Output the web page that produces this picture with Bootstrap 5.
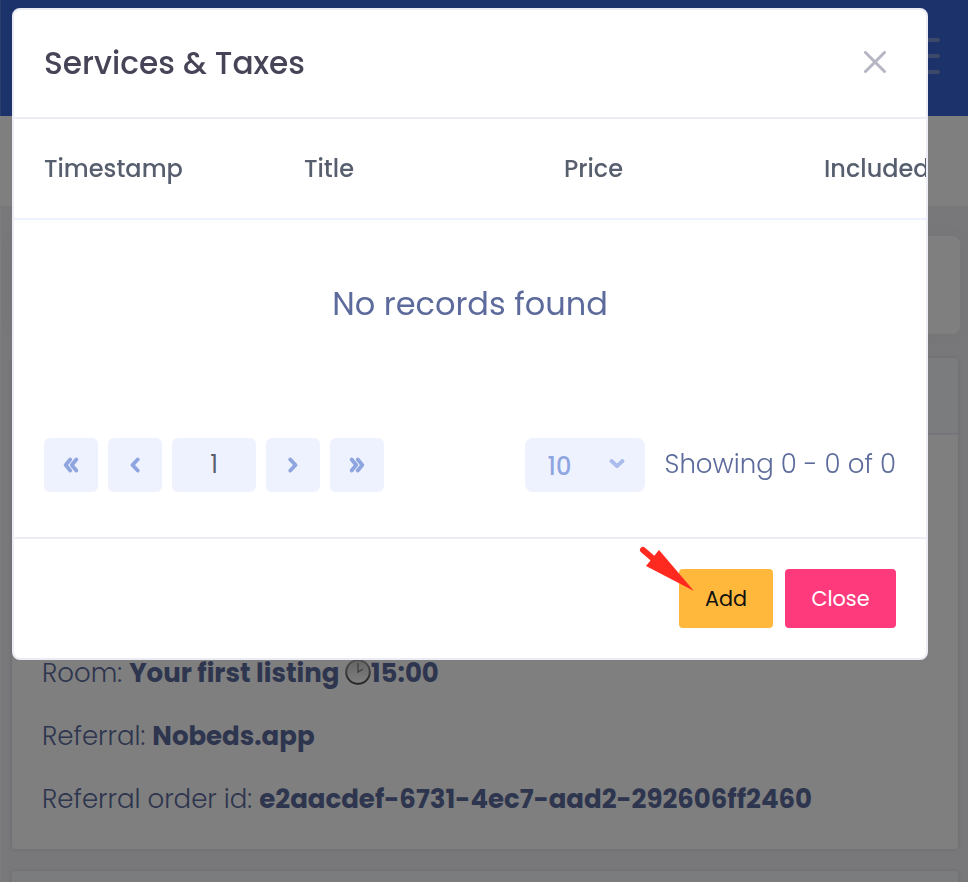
<!DOCTYPE html>
<html lang="en">
<head>
<meta charset="utf-8">
<meta name="viewport" content="width=device-width, initial-scale=1">
<title>Services &amp; Taxes</title>
<link href="https://cdn.jsdelivr.net/npm/bootstrap@5.3.0/dist/css/bootstrap.min.css" rel="stylesheet">
<style>
html{overflow:hidden}
body{font-family:Poppins,Inter,"Open Sans",sans-serif;background:#f1f1f6;color:#5c6b9c;height:882px;overflow:hidden;line-height:1.5}
.topbar{height:116px;background:#3864d6;padding:0 28px 4px 0;border-left:1px solid #5a7cd8}
.burger{width:36px;gap:12px}
.burger span{height:4px;border-radius:2px;background:#7a92d0}
.subbar{height:90px}
.page{height:676px;overflow:hidden;padding:30px 8px 0 11px;border-left:1px solid #fbfbfe}
.search-card{height:98px;border-radius:8px;box-shadow:0 0 24px rgba(60,70,110,.05)}
.info-card{border:0;border-radius:4px;box-shadow:0 0 5px rgba(60,60,90,.14);margin:24px 2px 0 0}
.info-card .card-header{height:77px;background:#f7f9fb;border-bottom:2px solid #ebedf2}
.info-body{height:414px;padding:0 30px 18px;font-size:26px;font-weight:300}
.info-body p{height:63px;line-height:63px;margin:0;white-space:nowrap}
.info-body b{font-weight:700}
.info-card.next{margin-top:22px}
.clock{width:26px;height:26px;vertical-align:-3px}
.modal-dialog.svc{width:916px;max-width:none;margin:8px 0 0 12px}
.svc .modal-content{height:652px;border:2px solid #ebecf4;border-radius:8px;overflow:hidden;background:#fff}
.svc .modal-header{height:109px;border-bottom:2px solid #ebecf4;padding:0 40px 2px 30px}
.svc .modal-title{font-size:31.2px;font-weight:500;color:#464457;padding-top:2px}
.svc .cross{margin-bottom:1px}
.svc .modal-body{padding:0}
.svc .heads{height:101px;border-bottom:2px solid #eef2ff;padding-left:30px;font-size:24px;font-weight:500;color:#575e6e}
.svc .heads>div{flex:0 0 260px}
.empty{height:168px;font-size:32px;font-weight:400}
.pager{padding:50px 30px 0;gap:10px;font-size:26px}
.pg{width:54px;height:54px;background:#eef2ff;border:0;border-radius:6px;padding:0 0 1px;color:#8fa5df}
.pg.cur{width:84px;color:#575e6e;font-size:24px;padding:0}
.pg svg{display:block;margin:auto}
.size{width:120px;height:54px;border-radius:8px;background:#eef2ff;color:#8fa5df;font-size:24px;font-weight:500;padding:3px 20px 0 23px}
.size svg{margin:0 0 6px}
.summary{font-weight:300;padding:0 0 2px 10px}
.svc .modal-footer{height:121px;border-top:2px solid #ebecf4;padding:0 30px;gap:12px}
.svc .modal-footer .btn{height:59px;margin:0;border:0;border-radius:4px;font-size:20.8px;padding:0}
.svc .add{width:94px;background:#ffb83c;color:#111}
.svc .shut{width:111px;background:#ff3a7c;color:#fff}
.pointer{position:absolute;left:624px;top:533px;width:56px;height:48px;z-index:3}
</style>
<script src="https://cdn.jsdelivr.net/npm/bootstrap@5.3.0/dist/js/bootstrap.bundle.min.js"></script>
</head>
<body>
<header class="topbar d-flex justify-content-end align-items-center">
  <div class="burger d-flex flex-column"><span></span><span></span><span></span></div>
</header>
<div class="subbar bg-white"></div>
<main class="page">
  <section class="search-card bg-white"></section>
  <section class="card info-card">
    <div class="card-header"></div>
    <div class="info-body d-flex flex-column justify-content-end">
      <p>Room: <b>Your first listing <svg class="clock" viewBox="0 0 26 26"><defs><linearGradient id="face" x1="0" x2="0" y1="0" y2="1"><stop stop-color="#c8c8c8"/><stop offset="1" stop-color="#fff"/></linearGradient><linearGradient id="rim" x1="0" x2="0" y1="0" y2="1"><stop stop-color="#a0a0a0"/><stop offset="1" stop-color="#484848"/></linearGradient></defs><circle cx="13" cy="13" r="11.800" fill="url(#face)" stroke="url(#rim)" stroke-width="2"/><path d="M13 4v9l5-3" fill="none" stroke="#808080" stroke-width="1.300"/></svg>15:00</b></p>
      <p>Referral: <b>Nobeds.app</b></p>
      <p>Referral order id: <b>e2aacdef-6731-4ec7-aad2-292606ff2460</b></p>
    </div>
  </section>
  <section class="card info-card next"><div class="card-header"></div></section>
</main>
<div class="modal-backdrop show"></div>
<div class="modal d-block overflow-hidden" tabindex="-1">
  <div class="modal-dialog svc">
    <div class="modal-content">
      <div class="modal-header">
        <h5 class="modal-title">Services &amp; Taxes</h5>
        <svg class="cross" width="22" height="22" viewBox="0 0 22 22" fill="none" stroke="#b5b5c3" stroke-width="3" stroke-linecap="round"><path d="M1.500 1.500l19 19m0-19l-19 19"/></svg>
      </div>
      <div class="modal-body">
        <div class="heads d-flex align-items-center"><div>Timestamp</div><div>Title</div><div>Price</div><div>Included</div></div>
        <div class="empty d-flex align-items-center justify-content-center">No records found</div>
        <div class="pager d-flex align-items-center">
          <button class="pg" aria-label="First"><svg width="16" height="16" viewBox="0 0 16 16" fill="none" stroke="currentColor" stroke-width="3.800" stroke-linecap="round" stroke-linejoin="round"><path d="M7.200 2.500L2.700 8l4.500 5.500M13.300 2.500L8.800 8l4.500 5.500"/></svg></button>
          <button class="pg" aria-label="Previous"><svg width="16" height="16" viewBox="0 0 16 16" fill="none" stroke="currentColor" stroke-width="3.800" stroke-linecap="round" stroke-linejoin="round"><path d="M10.700 2.500L5.500 8l5.200 5.500"/></svg></button>
          <button class="pg cur">1</button>
          <button class="pg" aria-label="Next"><svg width="16" height="16" viewBox="0 0 16 16" fill="none" stroke="currentColor" stroke-width="3.800" stroke-linecap="round" stroke-linejoin="round"><path d="M5.300 2.500L10.500 8l-5.200 5.500"/></svg></button>
          <button class="pg" aria-label="Last"><svg width="16" height="16" viewBox="0 0 16 16" fill="none" stroke="currentColor" stroke-width="3.800" stroke-linecap="round" stroke-linejoin="round"><path d="M2.700 2.500L7.200 8l-4.500 5.500M8.800 2.500L13.300 8l-4.500 5.500"/></svg></button>
          <div class="size d-flex align-items-center justify-content-between ms-auto"><span>10</span><svg width="16" height="12" viewBox="0 0 16 12" fill="none" stroke="#a9bcec" stroke-width="3.800" stroke-linecap="round" stroke-linejoin="round"><path d="M2.500 3L8 8.200 13.500 3"/></svg></div>
          <div class="summary">Showing 0 - 0 of 0</div>
        </div>
      </div>
      <div class="modal-footer">
        <button class="btn add">Add</button><button class="btn shut">Close</button>
      </div>
      <svg class="pointer" viewBox="0 0 56 48"><path d="M5 7l14 12" stroke="#ff2a1f" stroke-width="6" stroke-linecap="round"/><path d="M21 7L8 23l48 25z" fill="#ff2a1f"/></svg>
    </div>
  </div>
</div>
</body>
</html>
